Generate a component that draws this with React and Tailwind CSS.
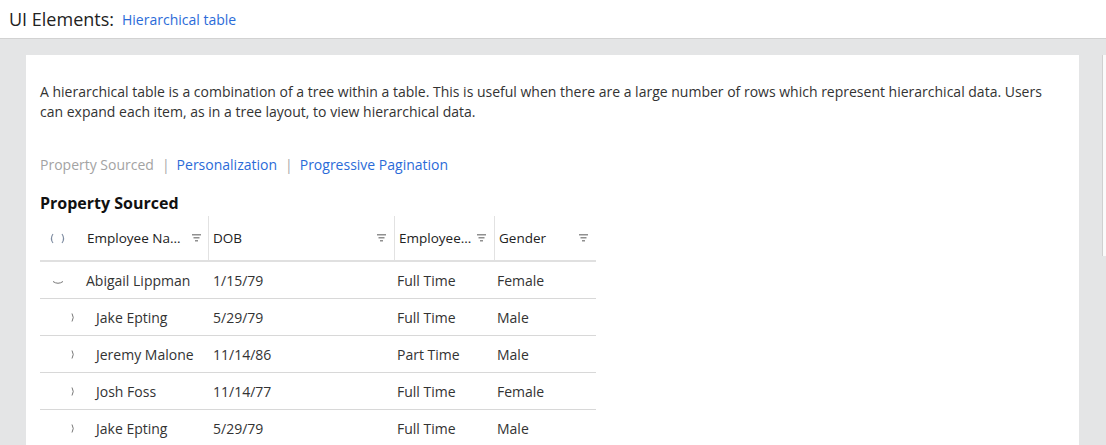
import React from 'react';

const rows = [
  { name: 'Abigail Lippman', dob: '1/15/79', type: 'Full Time', gender: 'Female', parent: true },
  { name: 'Jake Epting', dob: '5/29/79', type: 'Full Time', gender: 'Male' },
  { name: 'Jeremy Malone', dob: '11/14/86', type: 'Part Time', gender: 'Male' },
  { name: 'Josh Foss', dob: '11/14/77', type: 'Full Time', gender: 'Female' },
  { name: 'Jake Epting', dob: '5/29/79', type: 'Full Time', gender: 'Male' },
];

const Filter = () => (
  <svg width="9" height="8" viewBox="0 0 9 8" className="shrink-0">
    <rect x="0" y="0" width="9" height="1.5" fill="#909090" />
    <rect x="1.5" y="3" width="6" height="1.5" fill="#909090" />
    <rect x="3" y="6" width="3" height="1.5" fill="#909090" />
  </svg>
);

const HeadCell = ({ label, divider }) => (
  <div className={`flex items-center justify-between pl-1 pr-2 h-full ${divider ? 'border-l border-[#e2e2e2]' : ''}`}>
    <span className="text-[13.5px] text-[#222]">{label}</span>
    <Filter />
  </div>
);

const App = () => {
  return (
    <div className="min-h-[445px] bg-[#e4e5e6] text-[#333]" style={{ fontFamily: '"Open Sans", "Liberation Sans", sans-serif' }}>
      <div className="h-[39px] bg-white border-b border-[#d2d2d2] flex items-center pl-[9px] gap-[8px]">
        <span className="text-[18px] text-[#222]">UI Elements:</span>
        <span className="text-[14px] text-[#2b6bd8] mt-[1px]">Hierarchical table</span>
      </div>
      <div className="flex pt-[16px] pl-[26px]">
        <div className="w-[1053px] h-[390px] bg-white pl-[14px] pt-[27px]">
          <p className="text-[14px] leading-[20px] text-[#333] w-[1012px]">
            A hierarchical table is a combination of a tree within a table. This is useful when there are a large number of rows which represent hierarchical data. Users can expand each item, as in a tree layout, to view hierarchical data.
          </p>
          <div className="mt-[33px] flex items-center text-[14px] leading-[20px]">
            <span className="text-[#a3a3a3]">Property Sourced</span>
            <span className="text-[#a8a8a8] ml-[8px] mr-[7px]">|</span>
            <span className="text-[#2b6bd8]">Personalization</span>
            <span className="text-[#a8a8a8] ml-[8px] mr-[7px]">|</span>
            <span className="text-[#2b6bd8]">Progressive Pagination</span>
          </div>
          <div className="mt-[18px] text-[16px] font-bold leading-[20px] text-[#111]">Property Sourced</div>
          <div className="mt-[3px] w-[556px] grid grid-cols-[44px_124px_186px_100px_102px]">
            <div className="h-[46px] flex items-center pl-[9px] gap-[7px] border-b-2 border-[#e0e0e0]">
              <svg width="5" height="11" viewBox="0 0 5 11"><path d="M4 1 Q0.8 5.5 4 10" fill="none" stroke="#7d8ba0" strokeWidth="1.1" /></svg>
              <svg width="5" height="11" viewBox="0 0 5 11"><path d="M1 1 Q4.2 5.5 1 10" fill="none" stroke="#7d8ba0" strokeWidth="1.1" /></svg>
            </div>
            <div className="h-[46px] border-b-2 border-[#e0e0e0] flex items-center justify-between pl-[3px] pr-[7px]">
              <span className="text-[13.5px] text-[#222]">Employee Na...</span>
              <Filter />
            </div>
            <div className="h-[46px] border-b-2 border-[#e0e0e0]"><HeadCell label="DOB" divider /></div>
            <div className="h-[46px] border-b-2 border-[#e0e0e0]"><HeadCell label="Employee..." divider /></div>
            <div className="h-[46px] border-b-2 border-[#e0e0e0]"><HeadCell label="Gender" divider /></div>
            {rows.map((r, i) => (
              <React.Fragment key={i}>
                <div className="h-[37px] border-b border-[#d8d8d8] flex items-center pl-[12px]">
                  {r.parent ? (
                    <svg width="12" height="6" viewBox="0 0 12 6" className="mt-[5px]"><path d="M1 1.5 Q6 5 11 1.5" fill="none" stroke="#777" strokeWidth="1" /></svg>
                  ) : (
                    <svg width="4" height="9" viewBox="0 0 4 9" className="ml-[19px]"><path d="M1 0.5 Q3.5 4.5 1 8.5" fill="none" stroke="#777" strokeWidth="1" /></svg>
                  )}
                </div>
                <div className={`h-[37px] border-b border-[#d8d8d8] flex items-center text-[14px] text-[#333] ${r.parent ? 'pl-[2px]' : 'pl-[12px]'}`}>{r.name}</div>
                <div className="h-[37px] border-b border-[#d8d8d8] flex items-center text-[14px] text-[#333] pl-[5px]">{r.dob}</div>
                <div className="h-[37px] border-b border-[#d8d8d8] flex items-center text-[14px] text-[#333] pl-[3px]">{r.type}</div>
                <div className="h-[37px] border-b border-[#d8d8d8] flex items-center text-[14px] text-[#333] pl-[3px]">{r.gender}</div>
              </React.Fragment>
            ))}
          </div>
        </div>
        <div className="ml-[23px] flex-1 h-[201px] bg-[#fafafa] border-l border-[#d0d0d0]" />
      </div>
    </div>
  );
};

export default App;
